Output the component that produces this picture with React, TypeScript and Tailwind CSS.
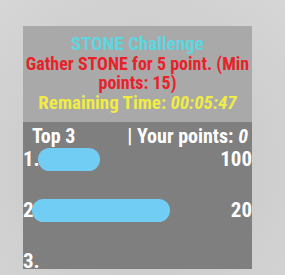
import React from 'react';

const leaders = [
  { rank: '1.', blob: 'w-[62px]', points: '100' },
  { rank: '2', blob: 'w-[138px]', points: '20' },
  { rank: '3.', blob: '', points: '' },
];

export default function App() {
  return (
    <div
      className="w-[285px] h-[275px] bg-[radial-gradient(circle_at_50%_60%,#c4c4c4,#d6d6d6)] pt-[26px] pl-[23px]"
      style={{ fontFamily: 'Roboto, "Liberation Sans", sans-serif', fontStretch: 'condensed' }}
    >
      <div className="w-[229px] h-[243px] flex flex-col font-bold overflow-hidden">
        {/* Challenge info */}
        <div className="h-[96px] shrink-0 bg-[#a9a9a9] flex flex-col items-center pt-[8px] text-center">
          <div className="text-[#5ed6e0] text-[19px] leading-[20px]">STONE Challenge</div>
          <div className="text-[#e8222a] text-[18px] leading-[19px] px-[1px]">
            Gather STONE for 5 point. (Min points: 15)
          </div>
          <div className="text-[#f0ec44] text-[19px] leading-[20px] mt-[1px]">
            Remaining Time: <span className="italic">00:05:47</span>
          </div>
        </div>

        {/* Leaderboard */}
        <div className="flex-1 min-h-0 bg-[#7f7f7f] text-white overflow-hidden">
          <div className="h-[24px] flex items-center justify-between text-[20px] leading-[20px] pl-[9px] pr-[4px] pt-[4px]">
            <span>Top 3</span>
            <span>| Your points: <span className="italic">0</span></span>
          </div>
          <div className="flex flex-col gap-[31px] mt-[3px]">
            {leaders.map((l) => (
              <div key={l.rank} className="h-[20px] shrink-0 flex items-center text-[21px] leading-[20px]">
                <span>{l.rank}</span>
                {l.blob && <span className={`h-[23px] rounded-full bg-[#72cdf4] -ml-[2px] ${l.blob}`} />}
                <span className="ml-auto">{l.points}</span>
              </div>
            ))}
          </div>
        </div>
      </div>
    </div>
  );
}
